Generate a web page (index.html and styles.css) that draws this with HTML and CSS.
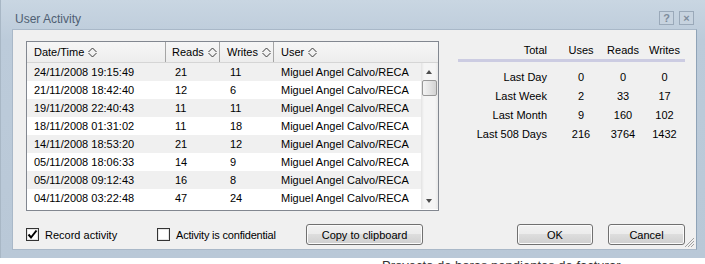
FILE: index.html
```
<!DOCTYPE html>
<html>
    <head>
        <meta charset="utf-8">
        <title>User Activity</title>
        <link rel="stylesheet" href="styles.css">
    </head>
    <body>
        <div class="desktop">
            <div class="behind">Proyecto de horas pendientes de facturar</div>
            <div class="window">
                <div class="titlebar">
                    <span class="title">User Activity</span>
                    <span class="tbtn">?</span>
                    <span class="tbtn">&#215;</span>
                </div>
                <div class="client">
                    <div class="main">
                        <div class="list">
                            <div class="lhead">
                                <div class="hcell">Date/Time <svg class="sort" width="9" height="11" viewBox="0 0 9 11"><polyline points="0.5,5 4.5,1 8.5,5" /><polyline points="0.5,6 4.5,10 8.5,6" /></svg></div>
                                <div class="hcell reads">Reads <svg class="sort" width="9" height="11" viewBox="0 0 9 11"><polyline points="0.5,5 4.5,1 8.5,5" /><polyline points="0.5,6 4.5,10 8.5,6" /></svg></div>
                                <div class="hcell">Writes <svg class="sort" width="9" height="11" viewBox="0 0 9 11"><polyline points="0.5,5 4.5,1 8.5,5" /><polyline points="0.5,6 4.5,10 8.5,6" /></svg></div>
                                <div class="hcell last">User <svg class="sort" width="9" height="11" viewBox="0 0 9 11"><polyline points="0.5,5 4.5,1 8.5,5" /><polyline points="0.5,6 4.5,10 8.5,6" /></svg></div>
                            </div>
                            <div class="lbody">
                                <div class="rows">
                                    <div class="row"><span>24/11/2008 19:15:49</span><span class="r">21</span><span class="w">11</span><span>Miguel Angel Calvo/RECA</span></div>
                                    <div class="row"><span>21/11/2008 18:42:40</span><span class="r">12</span><span class="w">6</span><span>Miguel Angel Calvo/RECA</span></div>
                                    <div class="row"><span>19/11/2008 22:40:43</span><span class="r">11</span><span class="w">11</span><span>Miguel Angel Calvo/RECA</span></div>
                                    <div class="row"><span>18/11/2008 01:31:02</span><span class="r">11</span><span class="w">18</span><span>Miguel Angel Calvo/RECA</span></div>
                                    <div class="row"><span>14/11/2008 18:53:20</span><span class="r">21</span><span class="w">12</span><span>Miguel Angel Calvo/RECA</span></div>
                                    <div class="row"><span>05/11/2008 18:06:33</span><span class="r">14</span><span class="w">9</span><span>Miguel Angel Calvo/RECA</span></div>
                                    <div class="row"><span>05/11/2008 09:12:43</span><span class="r">16</span><span class="w">8</span><span>Miguel Angel Calvo/RECA</span></div>
                                    <div class="row"><span>04/11/2008 03:22:48</span><span class="r">47</span><span class="w">24</span><span>Miguel Angel Calvo/RECA</span></div>
                                </div>
                                <div class="vscroll">
                                    <div class="arrow up"></div>
                                    <div class="thumb"></div>
                                    <div class="track"></div>
                                    <div class="arrow down"></div>
                                </div>
                            </div>
                        </div>
                        <div class="stats">
                            <div class="shead">
                                <span class="lbl">Total</span><span>Uses</span><span>Reads</span><span>Writes</span>
                            </div>
                            <div class="sep"></div>
                            <div class="srow"><span class="lbl">Last Day</span><span>0</span><span>0</span><span>0</span></div>
                            <div class="srow"><span class="lbl">Last Week</span><span>2</span><span>33</span><span>17</span></div>
                            <div class="srow"><span class="lbl">Last Month</span><span>9</span><span>160</span><span>102</span></div>
                            <div class="srow"><span class="lbl">Last 508 Days</span><span>216</span><span>3764</span><span>1432</span></div>
                        </div>
                    </div>
                    <div class="bottom">
                        <div class="check first"><span class="box"><svg width="11" height="11" viewBox="0 0 11 11"><polyline points="1.5,5.5 4,8.5 9.5,1.5" /></svg></span>Record activity</div>
                        <div class="check second"><span class="box"></span>Activity is confidential</div>
                        <button class="btn copy" type="button">Copy to clipboard</button>
                        <button class="btn ok" type="button">OK</button>
                        <button class="btn cancel" type="button">Cancel</button>
                    </div>
                    <svg class="grip" width="11" height="11" viewBox="0 0 11 11">
                        <line x1="10" y1="1" x2="1" y2="10" />
                        <line x1="10" y1="4" x2="4" y2="10" />
                        <line x1="10" y1="7" x2="7" y2="10" />
                    </svg>
                </div>
            </div>
        </div>
    </body>
</html>
```
FILE: styles.css
```
body{
    margin: 0;
    background: #ffffff;
    font-family: "Liberation Sans", Arial, sans-serif;
    font-size: 11px;
    color: #000000;
}
.desktop{
    position: relative;
    width: 705px;
    height: 264px;
    overflow: hidden;
    background: #ffffff;
}
.behind{
    padding-top: 258px;
    padding-left: 382px;
    font-size: 13px;
    line-height: 15px;
    color: #333333;
}
.window{
    position: absolute;
    left: 0;
    top: 0;
    width: 705px;
    height: 258px;
    box-sizing: border-box;
    display: flex;
    flex-direction: column;
    background: linear-gradient(#c9d6e2, #bccbda 40px, #b9c8d7);
    border-left: 1px solid #a8b7c5;
}
.titlebar{
    height: 29px;
    box-sizing: border-box;
    padding-top: 11px;
    padding-left: 14px;
    padding-right: 11px;
    display: flex;
    align-items: flex-start;
}
.title{
    flex: 1;
    font-size: 12px;
    line-height: 16px;
    color: #4f5f73;
}
.tbtn{
    width: 13px;
    height: 12px;
    margin-left: 5px;
    border: 1px solid #9aa9b9;
    background: #c7d3df;
    color: #7e8c9b;
    font-weight: bold;
    font-size: 11px;
    line-height: 12px;
    text-align: center;
}
.client{
    position: relative;
    flex: 1;
    margin: 0 8px 8px 11px;
    background: #f0f0f0;
    border: 1px solid #a9b8c8;
    border-right-color: #8fa3b7;
}
.main{
    display: flex;
    padding: 11px 0 0 13px;
}
.list{
    width: 411px;
    height: 168px;
    border: 1px solid #828790;
    background: #ffffff;
    display: flex;
    flex-direction: column;
}
.lhead{
    display: grid;
    grid-template-columns: 139px 54px 54px 1fr;
    height: 21px;
    box-sizing: border-box;
    border-bottom: 1px solid #d5d5d5;
    background: linear-gradient(#f6f6f6, #ededed);
}
.hcell{
    display: flex;
    align-items: center;
    padding-left: 7px;
    border-right: 1px solid #a5a5a5;
    white-space: nowrap;
}
.hcell.reads{
    padding-left: 6px;
}
.hcell.last{
    border-right: none;
}
.sort{
    margin-left: 4px;
    fill: none;
    stroke: #3a3a3a;
    stroke-width: 1;
}
.lbody{
    flex: 1;
    display: flex;
}
.rows{
    width: 394px;
}
.row{
    display: grid;
    grid-template-columns: 139px 54px 54px 147px;
    height: 18px;
    line-height: 18px;
    white-space: nowrap;
}
.row:nth-child(odd){
    background: #f0f0f0;
}
.row span{
    padding-left: 7px;
}
.row .r{
    padding-left: 9px;
}
.row .w{
    padding-left: 10px;
}
.vscroll{
    width: 17px;
    height: 146px;
    display: flex;
    flex-direction: column;
    background: linear-gradient(90deg, #e3e3e3, #f5f5f5 3px, #f5f5f5 14px, #e8e8e8);
}
.arrow{
    height: 17px;
    position: relative;
}
.arrow:after{
    content: "";
    position: absolute;
    left: 5px;
    width: 0;
    height: 0;
    border-left: 3.5px solid transparent;
    border-right: 3.5px solid transparent;
}
.arrow.up:after{
    top: 7px;
    border-bottom: 4px solid #4d4d4d;
}
.arrow.down:after{
    top: 7px;
    border-top: 4px solid #4d4d4d;
}
.thumb{
    height: 14px;
    margin: 0 1px;
    border: 1px solid #979797;
    border-radius: 2px;
    background: linear-gradient(90deg, #f3f3f3, #e4e4e4 50%, #d3d3d3);
}
.track{
    flex: 1;
}
.stats{
    margin-left: 19px;
    width: 227px;
}
.shead, .srow{
    display: grid;
    grid-template-columns: 102px 42px 42px 41px;
    text-align: center;
}
.shead{
    height: 18px;
    line-height: 18px;
}
.srow{
    height: 19px;
    line-height: 19px;
}
.lbl{
    text-align: right;
    padding-right: 13px;
}
.sep{
    height: 3px;
    background: #ccccE2;
    margin-bottom: 6px;
}
.bottom{
    display: flex;
    align-items: center;
    margin-top: 13px;
    padding-left: 13px;
    padding-right: 11px;
}
.check{
    display: flex;
    align-items: center;
    white-space: nowrap;
}
.check.first{
    width: 131px;
}
.check.second{
    width: 149px;
    letter-spacing: -0.2px;
}
.box{
    width: 11px;
    height: 11px;
    margin-right: 6px;
    border: 1px solid #333333;
    background: #ffffff;
    box-shadow: inset 0 0 0 1px #e6e6e6;
}
.box svg{
    display: block;
    fill: none;
    stroke: #000000;
    stroke-width: 2;
}
.btn{
    height: 21px;
    padding: 0;
    border: 1px solid #707070;
    border-radius: 3px;
    background: linear-gradient(#f2f2f2, #ebebeb 50%, #dddddd 50%, #cfcfcf);
    box-shadow: inset 0 0 0 1px #fbfbfb;
    font-family: "Liberation Sans", Arial, sans-serif;
    font-size: 11px;
    color: #000000;
}
.btn.copy{
    width: 117px;
}
.btn.ok{
    width: 76px;
    margin-left: auto;
}
.btn.cancel{
    width: 77px;
    margin-left: 15px;
}
.grip{
    position: absolute;
    right: 1px;
    bottom: 1px;
    stroke: #a0a0a0;
    stroke-width: 1;
}
```
